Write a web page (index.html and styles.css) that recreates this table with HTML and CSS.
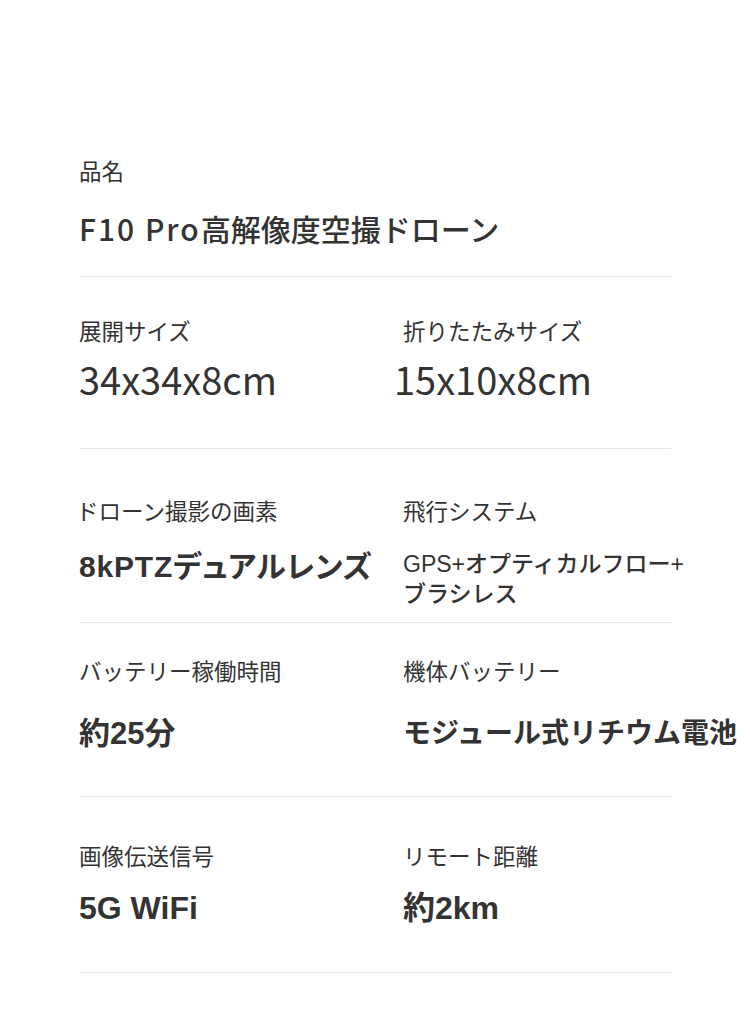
FILE: index.html
```html
<!DOCTYPE html>
<html lang="ja">
<head>
<meta charset="utf-8">
<title>F10 Pro</title>
<link rel="stylesheet" href="styles.css">
</head>
<body>
<main class="spec">
  <section class="row row-1">
    <div class="cell">
      <div class="label">品名</div>
      <div class="value value-name"><span class="name-latin">F10 Pro</span>高解像度空撮ドローン</div>
    </div>
  </section>
  <section class="row row-2">
    <div class="cell">
      <div class="label">展開サイズ</div>
      <div class="value value-size">34x34x8cm</div>
    </div>
    <div class="cell">
      <div class="label">折りたたみサイズ</div>
      <div class="value value-size value-shift">15x10x8cm</div>
    </div>
  </section>
  <section class="row row-3">
    <div class="cell">
      <div class="label label-shift">ドローン撮影の画素</div>
      <div class="value value-bold value-lens">8kPTZデュアルレンズ</div>
    </div>
    <div class="cell">
      <div class="label">飛行システム</div>
      <div class="value value-small">GPS+オプティカルフロー+<br>ブラシレス</div>
    </div>
  </section>
  <section class="row row-4">
    <div class="cell">
      <div class="label">バッテリー稼働時間</div>
      <div class="value value-bold value-time">約25分</div>
    </div>
    <div class="cell">
      <div class="label">機体バッテリー</div>
      <div class="value value-bold value-battery">モジュール式リチウム電池</div>
    </div>
  </section>
  <section class="row row-5">
    <div class="cell">
      <div class="label">画像伝送信号</div>
      <div class="value value-bold value-wifi">5G WiFi</div>
    </div>
    <div class="cell">
      <div class="label">リモート距離</div>
      <div class="value value-bold value-wifi">約2km</div>
    </div>
  </section>
</main>
</body>
</html>
```

FILE: styles.css
```css
html, body {
  margin: 0;
  padding: 0;
  background: #ffffff;
}

body {
  font-family: "Noto Sans CJK JP", "Noto Sans", sans-serif;
  color: #333333;
}

.spec {
  margin-left: 79px;
  width: 592px;
}

.row {
  display: grid;
  grid-template-columns: 324px 268px;
  align-items: start;
  box-sizing: border-box;
  border-bottom: 1px solid #e6e6e6;
}

.row-1 { grid-template-columns: 592px; height: 277px; padding-top: 159px; }
.row-2 { height: 172px; padding-top: 42px; }
.row-3 { height: 174px; padding-top: 50px; }
.row-4 { height: 174px; padding-top: 36px; }
.row-5 { height: 176px; padding-top: 47px; }

.cell {
  display: flex;
  flex-direction: column;
}

.label {
  font-size: 22.5px;
  line-height: 23px;
  color: #333333;
  white-space: nowrap;
}

.label-shift { margin-left: -3px; }

.value {
  white-space: nowrap;
  color: #333333;
}

.value-name {
  font-family: "Noto Sans CJK JP", "Noto Sans", sans-serif;
  font-weight: 500;
  font-size: 30px;
  line-height: 30px;
  margin-top: 31px;
}

.name-latin {
  letter-spacing: 2px;
}

.value-size {
  font-family: "Noto Sans CJK JP", sans-serif;
  font-size: 38px;
  line-height: 38px;
  margin-top: 18px;
}

.value-shift { margin-left: -9px; }

.value-bold {
  font-family: "Liberation Sans", "Noto Sans CJK JP", sans-serif;
  font-weight: 700;
}

.value-lens {
  font-size: 30px;
  line-height: 30px;
  margin-top: 30px;
  letter-spacing: 0.8px;
  font-feature-settings: "palt";
}

.value-small {
  font-family: "Liberation Sans", "Noto Sans CJK JP", sans-serif;
  font-weight: 500;
  font-size: 23px;
  line-height: 30px;
  margin-top: 27px;
}

.value-time {
  font-size: 31px;
  line-height: 31px;
  margin-top: 36px;
}

.value-battery {
  font-size: 28px;
  line-height: 30px;
  margin-top: 37px;
}

.value-wifi {
  font-size: 32px;
  line-height: 32px;
  margin-top: 25px;
}
```
